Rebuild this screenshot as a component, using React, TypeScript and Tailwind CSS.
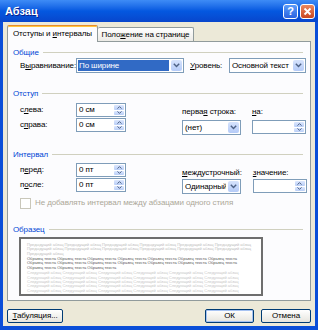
import React from 'react';

// Диалог Word «Абзац» в стиле Windows XP
const FONT = "font-['Liberation_Sans',Arial,sans-serif]";

function U({ children }: { children: React.ReactNode }) {
  return <span className="underline underline-offset-[1px]">{children}</span>;
}

function GroupHeader({ title }: { title: string }) {
  return (
    <div className="flex h-[11px] items-center gap-[4px]">
      <span className="text-[#0046D5] leading-[11px]">{title}</span>
      <div className="h-px flex-1 bg-[#D0D0BF]" />
    </div>
  );
}

function ArrowDown() {
  return (
    <svg width="7" height="5" viewBox="0 0 7 5">
      <path d="M0.8 0.8 L3.5 3.6 L6.2 0.8" fill="none" stroke="#4D6185" strokeWidth="1.4" />
    </svg>
  );
}

function SpinArrow({ up }: { up?: boolean }) {
  return (
    <svg width="5" height="3" viewBox="0 0 5 3">
      <path d={up ? 'M0.5 2.6 L2.5 0.6 L4.5 2.6' : 'M0.5 0.4 L2.5 2.4 L4.5 0.4'} fill="none" stroke="#4D6185" strokeWidth="1" />
    </svg>
  );
}

function Spin({ value, w }: { value?: string; w: string }) {
  return (
    <div className={`flex h-[14px] shrink-0 ${w} border border-[#7F9DB9] bg-white`}>
      <span className="flex-1 pl-[2px] leading-[12px] text-black">{value}</span>
      <div className="m-px flex w-[10px] flex-col gap-px">
        <div className="flex flex-1 items-center justify-center rounded-[1px] bg-gradient-to-b from-[#DCE7FD] to-[#B9CEF7]">
          <SpinArrow up />
        </div>
        <div className="flex flex-1 items-center justify-center rounded-[1px] bg-gradient-to-b from-[#DCE7FD] to-[#B9CEF7]">
          <SpinArrow />
        </div>
      </div>
    </div>
  );
}

function Select({ value, w, selected }: { value: string; w: string; selected?: boolean }) {
  return (
    <div className={`flex h-[15px] shrink-0 ${w} border border-[#7F9DB9] bg-white`}>
      <div className="flex min-w-0 flex-1 p-px">
        <span
          className={`flex-1 overflow-hidden pl-[1px] leading-[11px] ${selected ? 'bg-[#316AC5] text-white' : 'text-black'}`}
        >
          {value}
        </span>
      </div>
      <div className="m-px flex w-[11px] shrink-0 items-center justify-center rounded-[2px] bg-gradient-to-b from-[#D6E3FC] to-[#B5CBF8]">
        <ArrowDown />
      </div>
    </div>
  );
}

function XpButton({ children, w, isDefault }: { children: React.ReactNode; w: string; isDefault?: boolean }) {
  return (
    <div
      className={`flex h-[14px] ${w} items-center justify-center rounded-[2px] border border-[#003C74] bg-gradient-to-b from-white to-[#E6E5DE] leading-[12px] text-black ${
        isDefault ? 'shadow-[inset_0_0_0_1px_#A7C3F2]' : ''
      }`}
    >
      {children}
    </div>
  );
}

// строки образца, каждая отдельной строкой
const prevLines = [
  'Предыдущий абзац '.repeat(6),
  'Предыдущий абзац '.repeat(6),
  'Предыдущий абзац',
];
const sampleLines = [
  'Образец текста '.repeat(7),
  'Образец текста '.repeat(7),
  'Образец текста '.repeat(3),
];
const nextLines = Array.from({ length: 5 }, () => 'Следующий абзац '.repeat(6));

export default function App() {
  return (
    <div className={`${FONT} flex h-[330px] w-[318px] flex-col overflow-hidden whitespace-nowrap bg-[#0A4ED8] text-[8px] tracking-[-0.1px]`}>
      {/* Заголовок окна */}
      <div className="flex h-[22px] shrink-0 items-center bg-gradient-to-b from-[#3E8CF6] via-[#0458E0] to-[#0846CC] pl-[5px] pr-[3px]">
        <span className="flex-1 text-[11px] font-bold tracking-normal text-white [text-shadow:1px_1px_0_#0A1E8C]">Абзац</span>
        <div className="flex gap-[2px]">
          <div className="flex h-[15px] w-[15px] items-center justify-center rounded-[3px] border border-white bg-gradient-to-b from-[#5C9CFA] to-[#2B63E0] text-[11px] font-bold leading-none text-white">
            ?
          </div>
          <div className="flex h-[15px] w-[15px] items-center justify-center rounded-[3px] border border-white bg-gradient-to-b from-[#E9875E] to-[#C9461F]">
            <svg width="9" height="9" viewBox="0 0 9 9">
              <path d="M1.5 1.5 L7.5 7.5 M7.5 1.5 L1.5 7.5" stroke="white" strokeWidth="1.8" />
            </svg>
          </div>
        </div>
      </div>

      {/* Тело окна */}
      <div className="mx-[3px] mb-[4px] flex flex-1 flex-col bg-[#ECE9D8] px-[4px] pt-[3px]">
        {/* Вкладки */}
        <div className="flex items-end">
          <div className="relative z-10 -mb-px flex h-[17px] w-[91px] items-center justify-center rounded-t-[2px] border border-b-0 border-[#919B9C] border-t-[#E68B2C] bg-[#FCFCFE] shadow-[inset_0_1px_0_#FFC73C]">
            <span className="text-black">
              Отступы и <U>и</U>нтервалы
            </span>
          </div>
          <div className="flex h-[14px] w-[96px] items-center justify-center rounded-t-[2px] border border-b-0 border-l-0 border-[#919B9C] bg-gradient-to-b from-white to-[#ECEBE6]">
            <span className="text-black">
              Поло<U>ж</U>ение на странице
            </span>
          </div>
        </div>

        {/* Панель */}
        <div className="flex h-[260px] flex-col border border-[#919B9C] bg-[#FCFCFE] pb-[4px] pl-[5px] pr-[7px] pt-[5px] text-black">
          <GroupHeader title="Общие" />
          <div className="flex h-[15px] items-center">
            <span className="w-[63px] shrink-0 pl-[7px]">
              В<U>ы</U>равнивание:
            </span>
            <Select value="По ширине" w="w-[108px]" selected />
            <span className="ml-[6px] w-[39px] shrink-0">
              <U>У</U>ровень:
            </span>
            <Select value="Основной текст" w="w-[77px]" />
          </div>

          <div className="mt-[15px]">
            <GroupHeader title="Отступ" />
          </div>
          <div className="flex">
            <div className="mt-[4px] flex flex-col gap-px">
              <div className="flex items-center">
                <span className="w-[63px] pl-[7px]">
                  с<U>л</U>ева:
                </span>
                <Spin value="0 см" w="w-[50px]" />
              </div>
              <div className="flex items-center">
                <span className="w-[63px] pl-[7px]">
                  с<U>п</U>рава:
                </span>
                <Spin value="0 см" w="w-[50px]" />
              </div>
            </div>
            <div className="ml-[56px] mt-[7px] flex flex-col">
              <span className="h-[11px] leading-[11px]">
                перва<U>я</U> строка:
              </span>
              <div className="mt-[3px]">
                <Select value="(нет)" w="w-[59px]" />
              </div>
            </div>
            <div className="ml-[11px] mt-[7px] flex flex-col">
              <span className="h-[11px] leading-[11px]">
                <U>н</U>а:
              </span>
              <div className="mt-[3px]">
                <Spin w="w-[54px]" />
              </div>
            </div>
          </div>

          <div className="mt-[14px]">
            <GroupHeader title="Интервал" />
          </div>
          <div className="flex">
            <div className="mt-[3px] flex flex-col gap-px">
              <div className="flex items-center">
                <span className="w-[63px] pl-[7px]">
                  п<U>е</U>ред:
                </span>
                <Spin value="0 пт" w="w-[50px]" />
              </div>
              <div className="flex items-center">
                <span className="w-[63px] pl-[7px]">
                  п<U>о</U>сле:
                </span>
                <Spin value="0 пт" w="w-[50px]" />
              </div>
            </div>
            <div className="ml-[56px] mt-[7px] flex flex-col">
              <span className="h-[11px] leading-[11px]">
                <U>м</U>еждустрочный:
              </span>
              <div className="mt-px">
                <Select value="Одинарный" w="w-[59px]" />
              </div>
            </div>
            <div className="ml-[11px] mt-[7px] flex flex-col">
              <span className="h-[11px] leading-[11px]">
                <U>з</U>начение:
              </span>
              <div className="mt-px">
                <Spin w="w-[54px]" />
              </div>
            </div>
          </div>
          <div className="ml-[7px] mt-[3px] flex h-[13px] items-center gap-[4px] text-[#ACA899]">
            <div className="h-[11px] w-[11px] border border-[#C9C7BA] bg-white" />
            <span>Не добавлять интервал между абзацами одного стиля</span>
          </div>

          <div className="mt-[14px]">
            <GroupHeader title="Образец" />
          </div>
          <div className="ml-[6px] mt-[2px] flex h-[60px] w-[244px] flex-col overflow-hidden border-2 border-[#6E6E6E] bg-white px-[6px] pt-[4px] text-[4px] leading-[4.4px] tracking-normal">
            {prevLines.map((l, i) => (
              <div key={`p${i}`} className="text-[#BDBDBD]">{l}</div>
            ))}
            <div className="mt-[1px]" />
            {sampleLines.map((l, i) => (
              <div key={`s${i}`} className="text-[#555555]">{l}</div>
            ))}
            <div className="mt-[1px]" />
            {nextLines.map((l, i) => (
              <div key={`n${i}`} className="text-[#C8C8C8]">{l}</div>
            ))}
          </div>
        </div>

        {/* Кнопки */}
        <div className="mt-[8px] flex">
          <XpButton w="w-[56px]">
            <span>
              <U>Т</U>абуляция...
            </span>
          </XpButton>
          <div className="flex-1" />
          <XpButton w="w-[49px]" isDefault>
            ОК
          </XpButton>
          <div className="w-[7px]" />
          <XpButton w="w-[50px]">Отмена</XpButton>
        </div>
      </div>
    </div>
  );
}
